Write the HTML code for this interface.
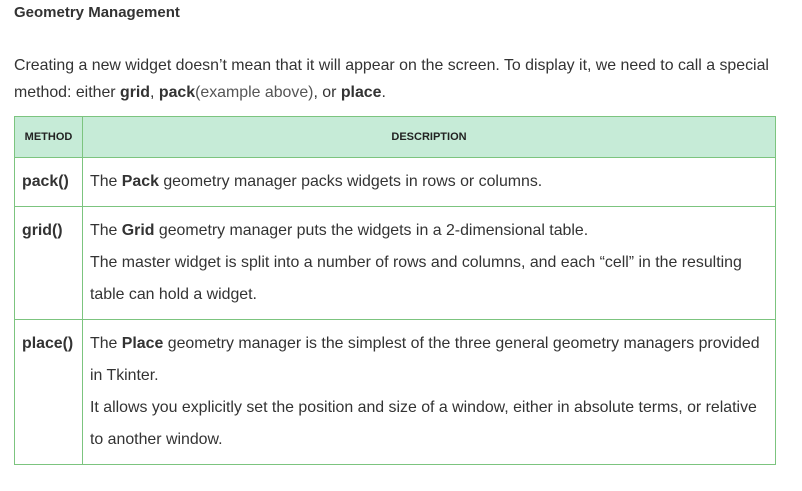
<!DOCTYPE html>
<html><head><style>
body{margin:0;background:#fff;font-family:"Liberation Sans",sans-serif;color:#333;width:802px;height:491px;overflow:hidden;}
.t{position:absolute;left:14px;top:4px;font-size:15px;font-weight:bold;color:#333;}
.p{position:absolute;left:14px;top:52px;width:775px;font-size:15.9px;line-height:27px;color:#333;}
.p .g{color:#555}
table{position:absolute;left:14px;top:116px;width:762px;border-collapse:collapse;font-size:15.9px;color:#333;}
td,th{border:1px solid #7cc47f;vertical-align:top;}
th{background:#c6ebd7;height:40px;font-size:11px;font-weight:bold;vertical-align:middle;padding:0;color:#222;}
td{padding:9px 8px 8px 7px;line-height:32px;}
td.m{font-weight:bold;width:51px;padding-left:7px;padding-right:7px;padding-top:8px;line-height:32px;}
td.d{padding-top:8px}
</style></head><body>
<div class="t">Geometry Management</div>
<div class="p">Creating a new widget doesn’t mean that it will appear on the screen. To display it, we need to call a special method: either <b>grid</b>, <b>pack</b><span class="g">(example above)</span>, or <b>place</b>.</div>
<table>
<tr><th style="width:67px">METHOD</th><th>DESCRIPTION</th></tr>
<tr><td class="m">pack()</td><td class="d">The <b>Pack</b> geometry manager packs widgets in rows or columns.</td></tr>
<tr><td class="m">grid()</td><td class="d">The <b>Grid</b> geometry manager puts the widgets in a 2-dimensional table.<br>The master widget is split into a number of rows and columns, and each “cell” in the resulting table can hold a widget.</td></tr>
<tr><td class="m">place()</td><td class="d">The <b>Place</b> geometry manager is the simplest of the three general geometry managers provided in Tkinter.<br>It allows you explicitly set the position and size of a window, either in absolute terms, or relative to another window.</td></tr>
</table>
</body></html>
